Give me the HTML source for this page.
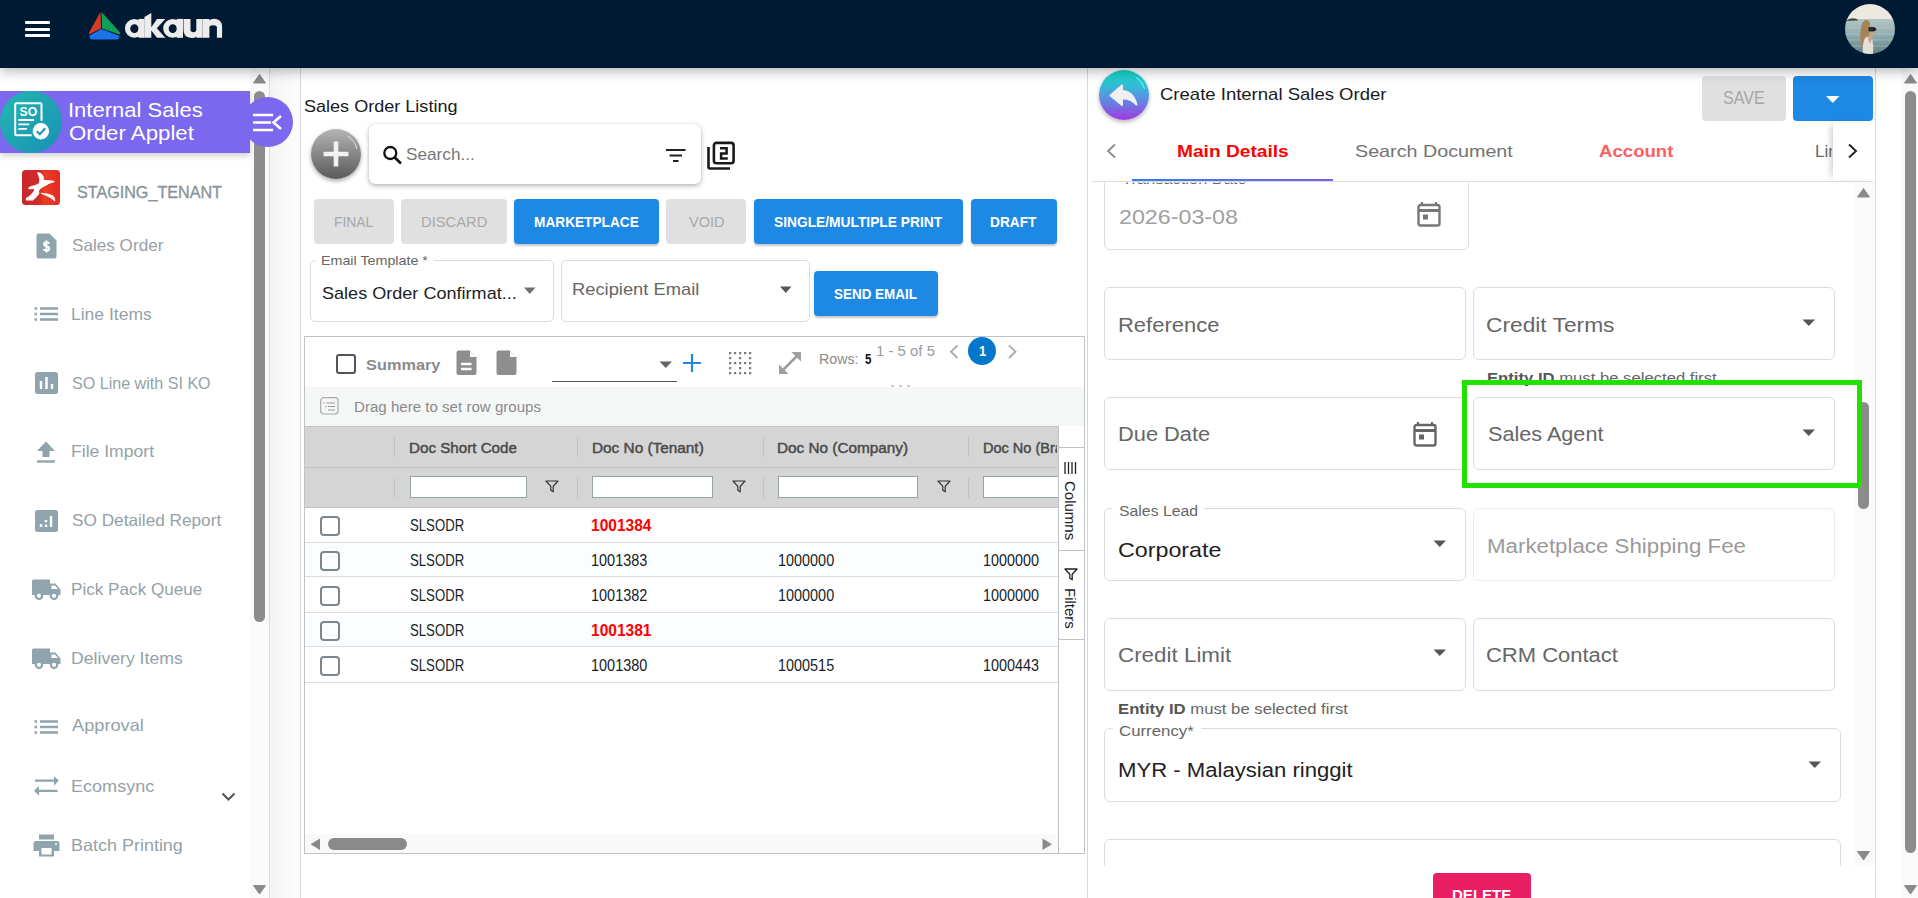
<!DOCTYPE html><html><head><meta charset="utf-8"><style>
*{box-sizing:border-box;margin:0;padding:0}
html,body{width:1918px;height:898px;overflow:hidden;background:#fff;font-family:"Liberation Sans",sans-serif}
.a{position:absolute}
.t{position:absolute;white-space:nowrap;line-height:1;transform-origin:0 0}
</style></head><body>
<!-- header -->
<div class="a" style="left:0;top:0;width:1918px;height:68px;background:#011a33;box-shadow:0 3px 12px rgba(0,0,0,.3);z-index:5"></div>
<div class="a" style="z-index:6;left:25px;top:21px;width:25px;height:3px;background:#fff;border-radius:1px"></div>
<div class="a" style="z-index:6;left:25px;top:27.5px;width:25px;height:3px;background:#fff;border-radius:1px"></div>
<div class="a" style="z-index:6;left:25px;top:34px;width:25px;height:3px;background:#fff;border-radius:1px"></div>
<svg class="a" style="z-index:6;left:88px;top:11px" width="34" height="30" viewBox="0 0 34 30">
 <path d="M12.5 1 L1 21.5 Q0.5 23 2 23 L13 17.5 Z" fill="#d63b2a"/>
 <path d="M13.5 1 L14 17.5 L31.5 23.5 Q32.5 23 32 21.5 Z" fill="#0aa05a"/>
 <path d="M13.5 18 L1.5 24.5 Q1.5 28.5 4 28.5 L29 28.5 Q31.5 28 31.5 25 Z" fill="#1a73e8"/>
</svg>
<svg class="a" style="z-index:7;left:120px;top:8px" width="110" height="34" viewBox="120 8 110 34">
 <g fill="#ececec" fill-rule="evenodd">
  <path d="M134.4 18.9 A9.5 9.45 0 1 0 134.4 37.8 A9.5 9.45 0 1 0 134.4 18.9 Z M134.4 24.3 A4.2 4.3 0 1 1 134.4 32.9 A4.2 4.3 0 1 1 134.4 24.3 Z"/>
  <rect x="138.6" y="18.9" width="6" height="18.9"/>
  <path d="M144.4 17 L151.3 12.9 V27.2 L157 18.9 H165.3 L156.8 28.3 L165.3 37.8 H157 L151.3 30.5 V37.8 H144.4 Z"/>
  <path d="M172.75 18.9 A9.6 9.45 0 1 0 172.75 37.8 A9.6 9.45 0 1 0 172.75 18.9 Z M172.75 24.3 A4.1 4.3 0 1 1 172.75 32.9 A4.1 4.3 0 1 1 172.75 24.3 Z"/>
  <rect x="176.8" y="18.9" width="6.2" height="18.9"/>
  <path d="M183.5 18.9 H190.5 V29.8 Q190.5 32.2 193.4 32.2 Q196.3 32.2 196.3 29.8 V18.9 H202.6 V37.8 H196.3 V36.4 Q194.6 38.1 191.5 38 Q183.5 37.6 183.5 30 Z"/>
  <path d="M202.6 37.8 V18.9 H209.4 V20.3 Q211.2 18.6 214.5 18.7 Q222.1 19.2 222.1 27 V37.8 H216.9 V27.2 Q216.9 25.2 213.2 25.2 Q209.4 25.2 209.4 27.2 V37.8 Z"/>
 </g>
</svg>
<svg class="a" style="z-index:6;left:1845px;top:4px" width="50" height="50" viewBox="0 0 50 50">
 <defs><clipPath id="av"><circle cx="25" cy="25" r="25"/></clipPath>
 <linearGradient id="sea" x1="0" y1="0" x2="0" y2="1"><stop offset="0" stop-color="#b3c6c6"/><stop offset="0.5" stop-color="#8eaaad"/><stop offset="1" stop-color="#5f8287"/></linearGradient></defs>
 <g clip-path="url(#av)">
  <rect x="0" y="0" width="50" height="16" fill="#ece9e1"/>
  <rect x="0" y="15" width="50" height="35" fill="url(#sea)"/>
  <path d="M1 17 Q5 13.5 9 14.5 Q12 14 13 16.5 Z" fill="#3e4b4a"/>
  <path d="M3 24 H47 M0 30 H50 M2 36 H48 M0 42 H50" stroke="#c9d6d6" stroke-width="0.6" opacity="0.6"/>
  <path d="M16.5 44 Q14 34 16 24 Q17 16 21.5 16 Q25 16.5 25 21 L24.5 30 Q23 38 21 46 Z" fill="#a68456"/>
  <path d="M18 50 Q17 40 20 34 Q24 31 27 34 Q29 42 28 50 Z" fill="#e3dfda"/>
  <path d="M23 34 Q25 28 27.5 27 L28.5 30 Q27 35 25 40 Z" fill="#c9a283"/>
  <rect x="23.5" y="23" width="6" height="4.5" rx="1" fill="#2b2b2b"/>
  <circle cx="29.5" cy="25.2" r="1.7" fill="#1d1d1d"/>
 </g>
</svg>

<!-- sidebar -->
<div class="a" style="left:250px;top:68px;width:19px;height:830px;background:#fafafa"></div>
<div class="a" style="left:269px;top:68px;width:1px;height:830px;background:#dcdcdc"></div>
<div class="a" style="left:270px;top:68px;width:30px;height:830px;background:linear-gradient(90deg,#f4f4f4,#fdfdfd)"></div>
<div class="a" style="left:300px;top:68px;width:1px;height:830px;background:#d8d8d8"></div>
<!-- sidebar scrollbar -->
<svg class="a" style="left:253px;top:74px" width="13" height="10"><path d="M6.5 0.5 L12.5 9 L0.5 9 Z" fill="#8a8a8a" stroke="#8a8a8a" stroke-linejoin="round"/></svg>
<div class="a" style="left:254px;top:91px;width:11px;height:531px;background:#8c8c8c;border-radius:6px"></div>
<svg class="a" style="left:253px;top:885px" width="13" height="10"><path d="M0.5 0.5 L12.5 0.5 L6.5 9 Z" fill="#8a8a8a" stroke="#8a8a8a" stroke-linejoin="round"/></svg>

<!-- applet bar -->
<div class="a" style="left:0;top:91px;width:250px;height:62px;background:#7b68ee;box-shadow:0 3px 6px rgba(0,0,0,.18)"></div>
<div class="a" style="left:0;top:91px;width:62px;height:62px;border-radius:50%;background:linear-gradient(135deg,#22b8b0,#1a8fb5)"></div>
<svg class="a" style="left:0;top:88px" width="70" height="70" viewBox="0 88 70 70">
 <path d="M31.6 135.3 H16.5 Q15.2 135.3 15.2 134 V104.5 Q15.2 103.2 16.5 103.2 H40.2 Q41.5 103.2 41.5 104.5 V120.7" fill="none" stroke="#fff" stroke-width="2"/>
 <text x="19.6" y="116.2" font-family="Liberation Sans" font-size="12.6" font-weight="700" fill="#fff" textLength="17.7" lengthAdjust="spacingAndGlyphs">SO</text>
 <path d="M18.3 120 H34 M18.3 124.4 H29.2 M18.3 128.8 H26.9" stroke="#fff" stroke-width="1.8"/>
 <circle cx="40.9" cy="131.3" r="8.2" fill="#fff"/>
 <path d="M36.8 131.2 L39.8 134.2 L45.2 128.2" fill="none" stroke="#1c9bb5" stroke-width="2.2"/>
</svg>
<div class="a" style="left:243px;top:97px;width:50px;height:50px;border-radius:50%;background:#7b68ee"></div>
<svg class="a" style="left:253px;top:113px" width="30" height="19" viewBox="0 0 30 19">
 <path d="M0 2 H20 M0 9.5 H18 M0 17 H20" stroke="#fff" stroke-width="2.6"/>
 <path d="M28 3 L20.5 9.5 L28 16" fill="none" stroke="#fff" stroke-width="2.6"/>
</svg>
<!-- ============ middle panel ============ -->
<div class="a" style="left:311px;top:129px;width:50px;height:50px;border-radius:50%;background:linear-gradient(#b4b4b4,#5a5a5a);box-shadow:0 2px 4px rgba(0,0,0,.35)"></div>
<svg class="a" style="left:311px;top:129px" width="50" height="50" viewBox="0 0 50 50">
 <path d="M36.5 7 A19.5 19.5 0 0 1 45.8 20" fill="none" stroke="#e8e8e8" stroke-width="0.9"/>
 <path d="M25 12.5 V37.5 M12.5 25 H37.5" stroke="#f2f2f2" stroke-width="4.6"/>
</svg>
<div class="a" style="left:369px;top:124px;width:332px;height:60px;background:#fff;border-radius:6px;box-shadow:0 2px 5px rgba(0,0,0,.28),0 0 1px rgba(0,0,0,.2)"></div>
<svg class="a" style="left:382px;top:145px" width="22" height="20" viewBox="0 0 22 20">
 <circle cx="8.3" cy="8" r="6" fill="none" stroke="#111" stroke-width="2.3"/>
 <path d="M12.5 12.2 L19 18.5" stroke="#111" stroke-width="2.6"/>
</svg>
<svg class="a" style="left:666px;top:148px" width="20" height="15" viewBox="0 0 20 15">
 <path d="M0 2 H19.5 M3.5 7.5 H16 M7 13 H12.5" stroke="#222" stroke-width="2.2"/>
</svg>
<svg class="a" style="left:706px;top:141px" width="30" height="30" viewBox="0 0 30 30">
 <path d="M2.5 6 V26 Q2.5 27.5 4 27.5 H24" fill="none" stroke="#1a1a1a" stroke-width="2.6"/>
 <rect x="7.9" y="1.9" width="19.7" height="20.4" rx="2.5" fill="none" stroke="#1a1a1a" stroke-width="2.6"/>
 <path d="M14 7.3 H20.6 V12.5 H15.1 V17.5 H21.8" fill="none" stroke="#1a1a1a" stroke-width="2.5"/>
</svg>
<!-- buttons -->
<div class="a" style="left:314px;top:199px;width:80px;height:45px;background:#e0e0e0;border-radius:4px"></div>
<div class="a" style="left:401px;top:199px;width:105.5px;height:45px;background:#e0e0e0;border-radius:4px"></div>
<div class="a" style="left:514px;top:199px;width:144.5px;height:45px;background:#1e88e5;border-radius:4px;box-shadow:0 2px 2px rgba(0,0,0,.22)"></div>
<div class="a" style="left:666px;top:199px;width:80px;height:45px;background:#e0e0e0;border-radius:4px"></div>
<div class="a" style="left:754px;top:199px;width:209px;height:45px;background:#1e88e5;border-radius:4px;box-shadow:0 2px 2px rgba(0,0,0,.22)"></div>
<div class="a" style="left:971px;top:199px;width:85.5px;height:45px;background:#1e88e5;border-radius:4px;box-shadow:0 2px 2px rgba(0,0,0,.22)"></div>
<!-- email fields -->
<div class="a" style="left:310px;top:260px;width:243.5px;height:61.5px;border:1px solid #dcdcdc;border-radius:5px"></div>
<div class="a" style="left:316px;top:255px;width:118px;height:8px;background:#fff"></div>
<svg class="a" style="left:523px;top:286.5px" width="14" height="8"><path d="M1 0.5 H12.5 L6.75 7 Z" fill="#707070"/></svg>
<div class="a" style="left:561px;top:259.5px;width:248.5px;height:62px;border:1px solid #dcdcdc;border-radius:5px"></div>
<svg class="a" style="left:779px;top:286px" width="14" height="8"><path d="M1 0.5 H12.5 L6.75 7 Z" fill="#555"/></svg>
<div class="a" style="left:814px;top:271px;width:124px;height:44.5px;background:#1e88e5;border-radius:4px;box-shadow:0 2px 2px rgba(0,0,0,.22)"></div>

<!-- ============ grid ============ -->
<div class="a" style="left:304px;top:336px;width:781px;height:518px;border:1px solid #bdc3c7"></div>
<!-- toolbar -->
<div class="a" style="left:336px;top:354px;width:20px;height:20px;border:2px solid #555;border-radius:3px"></div>
<svg class="a" style="left:456px;top:350px" width="22" height="26" viewBox="0 0 22 26">
 <path d="M2.5 0.5 H13.5 L20.5 7.5 V23 Q20.5 25 18.5 25 H2.5 Q0.5 25 0.5 23 V2.5 Q0.5 0.5 2.5 0.5 Z" fill="#8e8e8e"/>
 <path d="M13.5 0.5 V7.5 H20.5" fill="#fff" opacity="0"/>
 <path d="M14 1 L20 7 H14 Z" fill="#fff"/>
 <path d="M5 14 H15.5 M5 19 H15.5" stroke="#fff" stroke-width="2.6"/>
</svg>
<svg class="a" style="left:496px;top:350px" width="22" height="26" viewBox="0 0 22 26">
 <path d="M2.5 0.5 H13.5 L20.5 7.5 V23 Q20.5 25 18.5 25 H2.5 Q0.5 25 0.5 23 V2.5 Q0.5 0.5 2.5 0.5 Z" fill="#8e8e8e"/>
 <path d="M14 1 L20 7 H14 Z" fill="#fff"/>
</svg>
<div class="a" style="left:552px;top:380.5px;width:125px;height:1.5px;background:#555"></div>
<svg class="a" style="left:659px;top:361px" width="14" height="8"><path d="M0.5 0.5 H13 L6.75 7 Z" fill="#666"/></svg>
<svg class="a" style="left:682px;top:353px" width="20" height="20"><path d="M10 1 V19 M1 10 H19" stroke="#1e88e5" stroke-width="2.2"/></svg>
<svg class="a" style="left:729px;top:352px" width="24" height="24" viewBox="0 0 24 24"><rect x="0" y="0" width="2.2" height="2.2" fill="#7a7a7a"/><rect x="5" y="0" width="2.2" height="2.2" fill="#7a7a7a"/><rect x="10" y="0" width="2.2" height="2.2" fill="#7a7a7a"/><rect x="15" y="0" width="2.2" height="2.2" fill="#7a7a7a"/><rect x="20" y="0" width="2.2" height="2.2" fill="#7a7a7a"/><rect x="0" y="5" width="2.2" height="2.2" fill="#7a7a7a"/><rect x="10" y="5" width="2.2" height="2.2" fill="#7a7a7a"/><rect x="20" y="5" width="2.2" height="2.2" fill="#7a7a7a"/><rect x="0" y="10" width="2.2" height="2.2" fill="#7a7a7a"/><rect x="5" y="10" width="2.2" height="2.2" fill="#7a7a7a"/><rect x="10" y="10" width="2.2" height="2.2" fill="#7a7a7a"/><rect x="15" y="10" width="2.2" height="2.2" fill="#7a7a7a"/><rect x="20" y="10" width="2.2" height="2.2" fill="#7a7a7a"/><rect x="0" y="15" width="2.2" height="2.2" fill="#7a7a7a"/><rect x="10" y="15" width="2.2" height="2.2" fill="#7a7a7a"/><rect x="20" y="15" width="2.2" height="2.2" fill="#7a7a7a"/><rect x="0" y="20" width="2.2" height="2.2" fill="#7a7a7a"/><rect x="5" y="20" width="2.2" height="2.2" fill="#7a7a7a"/><rect x="10" y="20" width="2.2" height="2.2" fill="#7a7a7a"/><rect x="15" y="20" width="2.2" height="2.2" fill="#7a7a7a"/><rect x="20" y="20" width="2.2" height="2.2" fill="#7a7a7a"/></svg>
<svg class="a" style="left:778px;top:351px" width="24" height="24" viewBox="0 0 24 24">
 <path d="M4.5 19.5 L19.5 4.5" stroke="#9e9e9e" stroke-width="2.6"/>
 <path d="M1 23 V13.5 L10.5 23 Z M23 1 V10.5 L13.5 1 Z" fill="#9e9e9e"/>
</svg>
<svg class="a" style="left:948px;top:344px" width="12" height="16"><path d="M9.5 1.5 L3 7.7 L9.5 14" fill="none" stroke="#aaa" stroke-width="1.8"/></svg>
<div class="a" style="left:968px;top:336.5px;width:28px;height:28px;border-radius:50%;background:#0277cc"></div>
<svg class="a" style="left:1007px;top:344px" width="12" height="16"><path d="M2 1.5 L8.5 7.7 L2 14" fill="none" stroke="#aaa" stroke-width="1.8"/></svg>
<svg class="a" style="left:890px;top:384px" width="24" height="4"><path d="M1 2 H4 M9 2 H12 M17 2 H20" stroke="#bbb" stroke-width="1.5"/></svg>
<!-- drag bar -->
<div class="a" style="left:305px;top:387px;width:779px;height:39px;background:#f5f7f7"></div>
<svg class="a" style="left:320px;top:397px" width="19" height="18" viewBox="0 0 19 18">
 <rect x="0.7" y="0.7" width="17.3" height="16.3" rx="3" fill="none" stroke="#a9a9a9" stroke-width="1.2"/>
 <path d="M3.5 6 H5 M6.5 6 H15 M5 9.5 H6.5 M8 9.5 H15 M8 13 H15" stroke="#999" stroke-width="1.1"/>
</svg>
<!-- header rows -->
<div class="a" style="left:305px;top:426px;width:753px;height:82px;background:#d5d5d5;border-top:1px solid #bdc3c7"></div>
<div class="a" style="left:305px;top:467px;width:753px;height:1px;background:#bdc3c7"></div>
<div class="a" style="left:305px;top:507px;width:753px;height:1px;background:#bdc3c7"></div>
<div class="a" style="left:393.5px;top:437px;width:1px;height:20px;background:#c2c2c2"></div>
<div class="a" style="left:576.5px;top:437px;width:1px;height:20px;background:#c2c2c2"></div>
<div class="a" style="left:762.5px;top:437px;width:1px;height:20px;background:#c2c2c2"></div>
<div class="a" style="left:967.5px;top:437px;width:1px;height:20px;background:#c2c2c2"></div>
<div class="a" style="left:393.5px;top:478px;width:1px;height:20px;background:#c2c2c2"></div>
<div class="a" style="left:576.5px;top:478px;width:1px;height:20px;background:#c2c2c2"></div>
<div class="a" style="left:762.5px;top:478px;width:1px;height:20px;background:#c2c2c2"></div>
<div class="a" style="left:967.5px;top:478px;width:1px;height:20px;background:#c2c2c2"></div>
<div class="a" style="left:410px;top:476px;width:117px;height:22px;background:#fff;border:1px solid #95a5a6"></div>
<div class="a" style="left:592px;top:476px;width:121px;height:22px;background:#fff;border:1px solid #95a5a6"></div>
<div class="a" style="left:778px;top:476px;width:140px;height:22px;background:#fff;border:1px solid #95a5a6"></div>
<div class="a" style="left:983px;top:476px;width:80px;height:22px;background:#fff;border:1px solid #95a5a6"></div>
<svg class="a" style="left:545px;top:480px" width="14" height="13" viewBox="0 0 14 13"><path d="M1 1 H13 L8.2 6.3 V11.8 L5.8 10.2 V6.3 Z" fill="none" stroke="#333" stroke-width="1.2" stroke-linejoin="round"/></svg>
<svg class="a" style="left:731.5px;top:480px" width="14" height="13" viewBox="0 0 14 13"><path d="M1 1 H13 L8.2 6.3 V11.8 L5.8 10.2 V6.3 Z" fill="none" stroke="#333" stroke-width="1.2" stroke-linejoin="round"/></svg>
<svg class="a" style="left:936.5px;top:480px" width="14" height="13" viewBox="0 0 14 13"><path d="M1 1 H13 L8.2 6.3 V11.8 L5.8 10.2 V6.3 Z" fill="none" stroke="#333" stroke-width="1.2" stroke-linejoin="round"/></svg>
<!-- body rows -->
<div class="a" style="left:305px;top:542px;width:753px;height:35px;background:#fcfdfe;border-top:1px solid #d9dde0;border-bottom:1px solid #d9dde0"></div>
<div class="a" style="left:305px;top:612px;width:753px;height:35px;background:#fcfdfe;border-top:1px solid #d9dde0;border-bottom:1px solid #d9dde0"></div>
<div class="a" style="left:305px;top:682px;width:753px;height:1px;background:#d9dde0"></div>
<div class="a" style="left:319.5px;top:516px;width:20px;height:20px;border:2px solid #7d868c;border-radius:4px"></div>
<div class="a" style="left:319.5px;top:551px;width:20px;height:20px;border:2px solid #7d868c;border-radius:4px"></div>
<div class="a" style="left:319.5px;top:586px;width:20px;height:20px;border:2px solid #7d868c;border-radius:4px"></div>
<div class="a" style="left:319.5px;top:621px;width:20px;height:20px;border:2px solid #7d868c;border-radius:4px"></div>
<div class="a" style="left:319.5px;top:656px;width:20px;height:20px;border:2px solid #7d868c;border-radius:4px"></div>
<!-- side panel -->
<div class="a" style="left:1058px;top:426px;width:26px;height:427px;background:#fff;border-left:1px solid #bdc3c7"></div>
<div class="a" style="left:1058px;top:447px;width:26px;height:1px;background:#bdc3c7"></div>
<div class="a" style="left:1058px;top:550px;width:26px;height:1px;background:#bdc3c7"></div>
<div class="a" style="left:1058px;top:639px;width:26px;height:1px;background:#bdc3c7"></div>
<svg class="a" style="left:1064px;top:462px" width="14" height="12"><path d="M1 0 V12 M4.5 0 V12 M8 0 V12 M11.5 0 V12" stroke="#222" stroke-width="1.3"/></svg>
<svg class="a" style="left:1064px;top:567.5px" width="14" height="13" viewBox="0 0 14 13"><path d="M1 1 H13 L8.2 6.3 V11.8 L5.8 10.2 V6.3 Z" fill="none" stroke="#222" stroke-width="1.3" stroke-linejoin="round"/></svg>
<div class="a" style="left:1062.5px;top:481px;writing-mode:vertical-rl;font-size:15px;line-height:1;color:#222;white-space:nowrap">Columns</div>
<div class="a" style="left:1062.5px;top:588px;writing-mode:vertical-rl;font-size:15px;line-height:1;color:#222;white-space:nowrap">Filters</div>
<!-- h scroll -->
<div class="a" style="left:305px;top:834px;width:753px;height:19px;background:#f9f9f9"></div>
<svg class="a" style="left:310px;top:838px" width="11" height="13"><path d="M10 0.5 V12 L0.5 6.25 Z" fill="#8a8a8a"/></svg>
<div class="a" style="left:328px;top:838px;width:79px;height:11.5px;background:#8a8a8a;border-radius:6px"></div>
<svg class="a" style="left:1042px;top:838px" width="11" height="13"><path d="M0.5 0.5 V12 L10 6.25 Z" fill="#8a8a8a"/></svg>
<div class="a" style="left:1087px;top:68px;width:1px;height:830px;background:#d8d8d8"></div>
<!-- ============ right panel ============ -->
<div class="a" style="left:1099px;top:70px;width:50px;height:50px;border-radius:50%;background:linear-gradient(#0fd8c0,#30bfd6 30%,#5b8ee4 58%,#a338e0);box-shadow:0 2px 4px rgba(0,0,0,.3)"></div>
<svg class="a" style="left:1099px;top:70px" width="50" height="50" viewBox="0 0 50 50">
 <path d="M37 7.5 A20.5 20.5 0 0 1 45.5 19" fill="none" stroke="#6ff0f0" stroke-width="1.1"/>
 <path d="M11.5 25.5 L23 15.5 V21 Q34 21.5 37.5 34.5 Q32 28 23 28.5 V35 Z" fill="#f0f0f0" stroke="#f0f0f0" stroke-width="2" stroke-linejoin="round"/>
</svg>
<div class="a" style="left:1702px;top:76px;width:84px;height:45px;background:#e0e0e0;border-radius:4px"></div>
<div class="a" style="left:1793px;top:76px;width:80px;height:45px;background:#1e88e5;border-radius:4px"></div>
<svg class="a" style="left:1825px;top:95px" width="16" height="9"><path d="M1 1 H14.5 L7.75 8 Z" fill="#fff"/></svg>
<!-- tabs -->
<svg class="a" style="left:1105px;top:143px" width="12" height="16"><path d="M10 1.5 L3 8 L10 14.5" fill="none" stroke="#8a8a8a" stroke-width="1.8"/></svg>
<div class="a" style="left:1092px;top:180.5px;width:781px;height:1px;background:#dedede"></div>
<div class="a" style="left:1132px;top:178.5px;width:201px;height:2.5px;background:linear-gradient(90deg,#2c7ff0,#7b5ff0)"></div>
<div class="a" style="left:1833px;top:122px;width:40px;height:58px;background:#fff;box-shadow:-5px 0 7px -3px rgba(0,0,0,.2)"></div>
<svg class="a" style="left:1847px;top:143px" width="12" height="16"><path d="M2 1.5 L9 8 L2 14.5" fill="none" stroke="#222" stroke-width="1.9"/></svg>
<div class="a" style="left:1875px;top:68px;width:1px;height:830px;background:#d8d8d8"></div>
<!-- outer scrollbar -->
<div class="a" style="left:1901px;top:68px;width:17px;height:830px;background:#fafafa"></div>
<svg class="a" style="left:1904px;top:74px" width="13" height="10"><path d="M6.5 0.5 L12.5 9 L0.5 9 Z" fill="#8a8a8a" stroke="#8a8a8a" stroke-linejoin="round"/></svg>
<div class="a" style="left:1905px;top:90.5px;width:11px;height:762px;background:#8c8c8c;border-radius:6px"></div>
<svg class="a" style="left:1904px;top:885px" width="13" height="10"><path d="M0.5 0.5 L12.5 0.5 L6.5 9 Z" fill="#8a8a8a" stroke="#8a8a8a" stroke-linejoin="round"/></svg>
<!-- form scroll area -->
<div class="a" style="left:1089px;top:182px;width:786px;height:684px;overflow:hidden">
 <div class="a" style="left:765px;top:0;width:21px;height:684px;background:#fafafa"></div>
 <svg class="a" style="left:768px;top:6px" width="13" height="10"><path d="M6.5 0.5 L12.5 9 L0.5 9 Z" fill="#8a8a8a" stroke="#8a8a8a" stroke-linejoin="round"/></svg>
 <div class="a" style="left:769px;top:219.5px;width:11px;height:107.5px;background:#8c8c8c;border-radius:6px"></div>
 <svg class="a" style="left:768px;top:669px" width="13" height="10"><path d="M0.5 0.5 L12.5 0.5 L6.5 9 Z" fill="#8a8a8a" stroke="#8a8a8a" stroke-linejoin="round"/></svg>
 <!-- transaction date -->
 <div class="a" style="left:15px;top:-20px;width:365px;height:87.5px;border:1px solid #dcdcdc;border-radius:6px"></div>
 <svg class="a" style="left:328px;top:19px" width="24" height="26" viewBox="0 0 24 26"><path d="M5 1 V5 M19 1 V5" stroke="#777" stroke-width="2.2"/><rect x="1.5" y="4" width="21" height="20.5" rx="2" fill="none" stroke="#777" stroke-width="2.4"/><path d="M1.5 9.5 H22.5" stroke="#777" stroke-width="3"/><rect x="6" y="13.5" width="5" height="5" fill="#777"/></svg>
 <!-- row: reference / credit terms -->
 <div class="a" style="left:15px;top:105px;width:361.5px;height:72.5px;border:1px solid #dcdcdc;border-radius:6px"></div>
 <div class="a" style="left:384px;top:105px;width:362px;height:72.5px;border:1px solid #dcdcdc;border-radius:6px"></div>
 <svg class="a" style="left:713px;top:137px" width="14" height="8"><path d="M0.5 0.5 H13 L6.75 7 Z" fill="#555"/></svg>
 <!-- row: due date / sales agent -->
 <div class="a" style="left:15px;top:215px;width:361.5px;height:73px;border:1px solid #dcdcdc;border-radius:6px"></div>
 <svg class="a" style="left:324px;top:239px" width="24" height="26" viewBox="0 0 24 26"><path d="M5 1 V5 M19 1 V5" stroke="#666" stroke-width="2.2"/><rect x="1.5" y="4" width="21" height="20.5" rx="2" fill="none" stroke="#666" stroke-width="2.4"/><path d="M1.5 9.5 H22.5" stroke="#666" stroke-width="3"/><rect x="6" y="13.5" width="5" height="5" fill="#666"/></svg>
 <div class="a" style="left:384px;top:215px;width:362px;height:73px;border:1px solid #dcdcdc;border-radius:6px"></div>
 <svg class="a" style="left:713px;top:247px" width="14" height="8"><path d="M0.5 0.5 H13 L6.75 7 Z" fill="#555"/></svg>
 <!-- row: sales lead / marketplace -->
 <div class="a" style="left:15px;top:326px;width:361.5px;height:72.5px;border:1px solid #dcdcdc;border-radius:6px"></div>
 <div class="a" style="left:23px;top:320px;width:92px;height:10px;background:#fff"></div>
 <svg class="a" style="left:344px;top:358px" width="14" height="8"><path d="M0.5 0.5 H13 L6.75 7 Z" fill="#555"/></svg>
 <div class="a" style="left:384px;top:326px;width:362px;height:72.5px;border:1px solid #ececec;border-radius:6px"></div>
 <!-- row: credit limit / crm -->
 <div class="a" style="left:15px;top:436px;width:361.5px;height:72.5px;border:1px solid #dcdcdc;border-radius:6px"></div>
 <svg class="a" style="left:344px;top:467px" width="14" height="8"><path d="M0.5 0.5 H13 L6.75 7 Z" fill="#555"/></svg>
 <div class="a" style="left:384px;top:436px;width:362px;height:72.5px;border:1px solid #dcdcdc;border-radius:6px"></div>
 <!-- currency -->
 <div class="a" style="left:15px;top:546px;width:737px;height:73.5px;border:1px solid #dcdcdc;border-radius:6px"></div>
 <div class="a" style="left:23.5px;top:540px;width:88px;height:10px;background:#fff"></div>
 <svg class="a" style="left:719px;top:579px" width="14" height="8"><path d="M0.5 0.5 H13 L6.75 7 Z" fill="#555"/></svg>
 <!-- next field -->
 <div class="a" style="left:15px;top:657px;width:737px;height:73px;border:1px solid #dcdcdc;border-radius:6px"></div>
</div>
<div class="a" style="left:1433px;top:873px;width:98px;height:40px;background:#e91e63;border-radius:4px"></div>
<!-- green highlight -->
<div class="a" style="z-index:20;left:1462px;top:379.5px;width:399.5px;height:108.5px;border:5px solid #22e000"></div>
<!-- sidebar icons -->
<div class="a" style="left:22.3px;top:169.8px;width:37.5px;height:35.3px;border-radius:3.5px;background:linear-gradient(90deg,#c9272e,#d22a27 45%,#ea3d23 60%,#e52a22)"></div>
<svg class="a" style="left:22.3px;top:169.8px" width="38" height="36" viewBox="0 0 38 36">
 <path d="M15.8 2.8 Q19 3 20.8 6.5 Q21.5 8.5 21.3 10.3 Q27 10.5 31.8 11.5 Q28 12.5 25.8 13.8 Q21 16 17.3 19 Q15.5 21.5 16.8 23.3 Q13 28 10.8 29.8 L4.5 29.8 Q4.5 27.5 6 27.8 Q10 25 12.3 21.3 L12.8 17.8 Q10 19 6.8 18.3 Q9 16.5 12.5 16 Q15 15 17.5 13.5 L18 9.5 Q17.5 6 15.8 2.8 Z" fill="#fff" stroke="#fff" stroke-width="1.3" stroke-linejoin="round"/>
 <path d="M19.3 23.3 Q26 23.5 30.8 25.8 Q33 28 32.8 30.8 Q30 28.5 27.8 27.3 Q24 25 19.3 23.3 Z" fill="#fff" stroke="#fff" stroke-width="1" stroke-linejoin="round"/>
</svg>
<svg class="a" style="left:36px;top:233px" width="21" height="26" viewBox="0 0 21 26">
 <path d="M2.5 0.5 H13.5 L20.5 7.5 V23.5 Q20.5 25.5 18.5 25.5 H2.5 Q0.5 25.5 0.5 23.5 V2.5 Q0.5 0.5 2.5 0.5 Z" fill="#90a4ae"/>
 <path d="M13.5 10.5 Q12.5 9.2 10.5 9.2 Q8 9.3 8 11.2 Q8.2 13 10.5 13.3 Q13.2 13.7 13.2 15.6 Q13 17.6 10.5 17.7 Q8.2 17.6 7.6 16.2 M10.5 7.5 V19.5" fill="none" stroke="#fff" stroke-width="1.9"/>
</svg>
<svg class="a" style="left:34px;top:307px" width="25" height="14" viewBox="0 0 25 14">
 <path d="M0.5 1.5 H3 M0.5 7 H3 M0.5 12.5 H3 M6 1.5 H24 M6 7 H24 M6 12.5 H24" stroke="#90a4ae" stroke-width="2.3"/>
</svg>
<svg class="a" style="left:35px;top:372px" width="23" height="22" viewBox="0 0 23 22">
 <rect x="0" y="0" width="23" height="22" rx="2.5" fill="#90a4ae"/>
 <path d="M6 9 V17 M11.5 5 V17 M17 12 V17" stroke="#fff" stroke-width="2.4"/>
</svg>
<svg class="a" style="left:36px;top:441px" width="20" height="22" viewBox="0 0 20 22">
 <path d="M10 0.5 L19 10 H13.5 V16 H6.5 V10 H1 Z" fill="#90a4ae"/>
 <path d="M1 20.5 H19" stroke="#90a4ae" stroke-width="2.4"/>
</svg>
<svg class="a" style="left:35px;top:510px" width="23" height="22" viewBox="0 0 23 22">
 <rect x="0" y="0" width="23" height="22" rx="2.5" fill="#90a4ae"/>
 <path d="M6 14 V17 M11 10 V12.2 M11 14.5 V17 M16 6 V17" stroke="#fff" stroke-width="2.4"/>
</svg>
<svg class="a" style="left:32px;top:579px" width="29" height="21" viewBox="0 0 29 21">
 <path d="M0 2 Q0 0.5 1.5 0.5 H18 V4.5 H23.5 L28.5 10.5 V16 H0 Z" fill="#90a4ae"/>
 <path d="M19.5 6.5 H23 L26 10 H19.5 Z" fill="#fff"/>
 <circle cx="7" cy="16.8" r="3.2" fill="#fff" stroke="#90a4ae" stroke-width="2.2"/>
 <circle cx="22" cy="16.8" r="3.2" fill="#fff" stroke="#90a4ae" stroke-width="2.2"/>
</svg>
<svg class="a" style="left:32px;top:647.5px" width="29" height="21" viewBox="0 0 29 21">
 <path d="M0 2 Q0 0.5 1.5 0.5 H18 V4.5 H23.5 L28.5 10.5 V16 H0 Z" fill="#90a4ae"/>
 <path d="M19.5 6.5 H23 L26 10 H19.5 Z" fill="#fff"/>
 <circle cx="7" cy="16.8" r="3.2" fill="#fff" stroke="#90a4ae" stroke-width="2.2"/>
 <circle cx="22" cy="16.8" r="3.2" fill="#fff" stroke="#90a4ae" stroke-width="2.2"/>
</svg>
<svg class="a" style="left:34px;top:720px" width="25" height="14" viewBox="0 0 25 14">
 <path d="M0.5 1.5 H3 M0.5 7 H3 M0.5 12.5 H3 M6 1.5 H24 M6 7 H24 M6 12.5 H24" stroke="#90a4ae" stroke-width="2.3"/>
</svg>
<svg class="a" style="left:34px;top:776px" width="26" height="21" viewBox="0 0 26 21">
 <path d="M1 4.6 H21 M4 14.8 H23.6" stroke="#90a4ae" stroke-width="2.2"/>
 <path d="M20 0.3 L24.9 4.6 L20 9.7 Z M5 10 L0 14.8 L5 19.8 Z" fill="#90a4ae"/>
</svg>

<svg class="a" style="left:33px;top:834px" width="27" height="23" viewBox="0 0 27 23">
 <rect x="6" y="0.5" width="15" height="5" fill="#90a4ae"/>
 <path d="M3 7 H24 Q26.5 7 26.5 9.5 V17 H21 V22.5 H6 V17 H0.5 V9.5 Q0.5 7 3 7 Z" fill="#90a4ae"/>
 <rect x="8.5" y="14" width="10" height="6.5" fill="#fff"/><circle cx="23" cy="10" r="1" fill="#fff"/>
</svg>
<svg class="a" style="left:221px;top:792px" width="15" height="10"><path d="M1.5 1.5 L7.5 7.5 L13.5 1.5" fill="none" stroke="#555" stroke-width="2"/></svg>

<span class="t" id="t0" style="left:304.00px;top:97.9px;font-size:17.01px;color:#1a1a1a;font-weight:400;transform:scaleX(1.0617);">Sales Order Listing</span>
<span class="t" id="t1" style="left:68.33px;top:99.7px;font-size:20.64px;color:#fff;font-weight:400;transform:scaleX(1.0681);">Internal Sales</span>
<span class="t" id="t2" style="left:69.40px;top:122.7px;font-size:20.64px;color:#fff;font-weight:400;transform:scaleX(1.0785);">Order Applet</span>
<span class="t" id="t3" style="left:77.00px;top:183.9px;font-size:16.28px;color:#89949a;font-weight:400;transform:scaleX(0.9920);-webkit-text-stroke:0.35px #89949a">STAGING_TENANT</span>
<span class="t" id="t4" style="left:71.80px;top:236.8px;font-size:16.28px;color:#95a1a7;font-weight:400;transform:scaleX(1.0530);">Sales Order</span>
<span class="t" id="t5" style="left:70.72px;top:305.9px;font-size:16.28px;color:#95a1a7;font-weight:400;transform:scaleX(1.0757);">Line Items</span>
<span class="t" id="t6" style="left:71.80px;top:374.9px;font-size:16.28px;color:#95a1a7;font-weight:400;transform:scaleX(0.9894);">SO Line with SI KO</span>
<span class="t" id="t7" style="left:70.72px;top:443.3px;font-size:16.28px;color:#95a1a7;font-weight:400;transform:scaleX(1.0812);">File Import</span>
<span class="t" id="t8" style="left:71.80px;top:512.0px;font-size:16.28px;color:#95a1a7;font-weight:400;transform:scaleX(1.0578);">SO Detailed Report</span>
<span class="t" id="t9" style="left:70.75px;top:580.6px;font-size:16.28px;color:#95a1a7;font-weight:400;transform:scaleX(1.0532);">Pick Pack Queue</span>
<span class="t" id="t10" style="left:70.72px;top:650.3px;font-size:16.28px;color:#95a1a7;font-weight:400;transform:scaleX(1.0844);">Delivery Items</span>
<span class="t" id="t11" style="left:71.80px;top:717.4px;font-size:16.28px;color:#95a1a7;font-weight:400;transform:scaleX(1.1198);">Approval</span>
<span class="t" id="t12" style="left:70.69px;top:777.8px;font-size:16.28px;color:#95a1a7;font-weight:400;transform:scaleX(1.1098);">Ecomsync</span>
<span class="t" id="t13" style="left:70.70px;top:837.0px;font-size:16.28px;color:#95a1a7;font-weight:400;transform:scaleX(1.1046);">Batch Printing</span>
<span class="t" id="t14" style="left:406.40px;top:146.5px;font-size:15.70px;color:#777;font-weight:400;transform:scaleX(1.0957);">Search...</span>
<span class="t" id="t15" style="left:333.51px;top:214.1px;font-size:15.55px;color:#a8a8a8;font-weight:500;transform:scaleX(0.8891);">FINAL</span>
<span class="t" id="t16" style="left:420.75px;top:214.1px;font-size:15.55px;color:#a8a8a8;font-weight:500;transform:scaleX(0.9470);">DISCARD</span>
<span class="t" id="t17" style="left:533.72px;top:214.1px;font-size:15.55px;color:#fff;font-weight:700;transform:scaleX(0.8793);">MARKETPLACE</span>
<span class="t" id="t18" style="left:688.90px;top:214.1px;font-size:15.55px;color:#a8a8a8;font-weight:500;transform:scaleX(0.9370);">VOID</span>
<span class="t" id="t19" style="left:774.00px;top:214.1px;font-size:15.55px;color:#fff;font-weight:700;transform:scaleX(0.8858);">SINGLE/MULTIPLE PRINT</span>
<span class="t" id="t20" style="left:989.72px;top:214.1px;font-size:15.55px;color:#fff;font-weight:700;transform:scaleX(0.8816);">DRAFT</span>
<span class="t" id="t21" style="left:834.00px;top:286.3px;font-size:15.55px;color:#fff;font-weight:700;transform:scaleX(0.8653);">SEND EMAIL</span>
<span class="t" id="t22" style="left:320.64px;top:255.2px;font-size:12.35px;color:#666;font-weight:400;transform:scaleX(1.1567);">Email Template *</span>
<span class="t" id="t23" style="left:322.40px;top:285.2px;font-size:17.01px;color:#222;font-weight:400;transform:scaleX(1.0627);">Sales Order Confirmat...</span>
<span class="t" id="t24" style="left:571.72px;top:280.8px;font-size:17.01px;color:#666;font-weight:400;transform:scaleX(1.0780);">Recipient Email</span>
<span class="t" id="t25" style="left:366.20px;top:356.8px;font-size:15.12px;color:#8a8a8a;font-weight:700;transform:scaleX(1.0812);">Summary</span>
<span class="t" id="t26" style="left:819.10px;top:351.9px;font-size:14.24px;color:#8a8a8a;font-weight:400;transform:scaleX(0.9975);">Rows:</span>
<span class="t" id="t27" style="left:864.50px;top:351.9px;font-size:14.24px;color:#111;font-weight:700;transform:scaleX(0.8125);">5</span>
<span class="t" id="t28" style="left:875.95px;top:344.2px;font-size:14.24px;color:#9a9a9a;font-weight:400;transform:scaleX(1.0495);">1 - 5 of 5</span>
<span class="t" id="t29" style="left:978.50px;top:344.0px;font-size:14.83px;color:#fff;font-weight:700;transform:scaleX(0.8750);">1</span>
<span class="t" id="t30" style="left:353.96px;top:399.7px;font-size:14.53px;color:#8a8a8a;font-weight:400;transform:scaleX(1.0394);">Drag here to set row groups</span>
<span class="t" id="t31" style="left:408.96px;top:440.9px;font-size:14.53px;color:#4a4a4a;font-weight:400;transform:scaleX(1.0450);-webkit-text-stroke:0.45px #4a4a4a">Doc Short Code</span>
<span class="t" id="t32" style="left:591.64px;top:440.9px;font-size:14.53px;color:#4a4a4a;font-weight:400;transform:scaleX(1.0573);-webkit-text-stroke:0.45px #4a4a4a">Doc No (Tenant)</span>
<span class="t" id="t33" style="left:777.44px;top:440.9px;font-size:14.53px;color:#4a4a4a;font-weight:400;transform:scaleX(1.0556);-webkit-text-stroke:0.45px #4a4a4a">Doc No (Company)</span>
<span class="t" id="t34" style="left:409.60px;top:517.7px;font-size:15.99px;color:#181d1f;font-weight:400;transform:scaleX(0.8244);">SLSODR</span>
<span class="t" id="t35" style="left:591.43px;top:517.7px;font-size:15.99px;color:#f00;font-weight:700;transform:scaleX(0.9709);">1001384</span>
<span class="t" id="t36" style="left:409.60px;top:552.7px;font-size:15.99px;color:#181d1f;font-weight:400;transform:scaleX(0.8244);">SLSODR</span>
<span class="t" id="t37" style="left:591.49px;top:552.7px;font-size:15.99px;color:#181d1f;font-weight:400;transform:scaleX(0.9056);">1001383</span>
<span class="t" id="t38" style="left:778.10px;top:552.7px;font-size:15.99px;color:#181d1f;font-weight:400;transform:scaleX(0.9023);">1000000</span>
<span class="t" id="t39" style="left:983.10px;top:552.7px;font-size:15.99px;color:#181d1f;font-weight:400;transform:scaleX(0.9007);">1000000</span>
<span class="t" id="t40" style="left:409.60px;top:587.7px;font-size:15.99px;color:#181d1f;font-weight:400;transform:scaleX(0.8244);">SLSODR</span>
<span class="t" id="t41" style="left:591.49px;top:587.7px;font-size:15.99px;color:#181d1f;font-weight:400;transform:scaleX(0.9056);">1001382</span>
<span class="t" id="t42" style="left:778.10px;top:587.7px;font-size:15.99px;color:#181d1f;font-weight:400;transform:scaleX(0.9023);">1000000</span>
<span class="t" id="t43" style="left:983.10px;top:587.7px;font-size:15.99px;color:#181d1f;font-weight:400;transform:scaleX(0.9007);">1000000</span>
<span class="t" id="t44" style="left:409.60px;top:622.7px;font-size:15.99px;color:#181d1f;font-weight:400;transform:scaleX(0.8244);">SLSODR</span>
<span class="t" id="t45" style="left:591.43px;top:622.7px;font-size:15.99px;color:#f00;font-weight:700;transform:scaleX(0.9709);">1001381</span>
<span class="t" id="t46" style="left:409.60px;top:657.7px;font-size:15.99px;color:#181d1f;font-weight:400;transform:scaleX(0.8244);">SLSODR</span>
<span class="t" id="t47" style="left:591.49px;top:657.7px;font-size:15.99px;color:#181d1f;font-weight:400;transform:scaleX(0.9056);">1001380</span>
<span class="t" id="t48" style="left:778.10px;top:657.7px;font-size:15.99px;color:#181d1f;font-weight:400;transform:scaleX(0.9023);">1000515</span>
<span class="t" id="t49" style="left:983.10px;top:657.7px;font-size:15.99px;color:#181d1f;font-weight:400;transform:scaleX(0.9007);">1000443</span>
<span class="t" id="t50" style="left:1160.40px;top:87.2px;font-size:16.57px;color:#1a1a1a;font-weight:400;transform:scaleX(1.1182);">Create Internal Sales Order</span>
<span class="t" id="t51" style="left:1723.20px;top:90.2px;font-size:17.73px;color:#a6a6a6;font-weight:500;transform:scaleX(0.9103);">SAVE</span>
<span class="t" id="t52" style="left:1176.77px;top:142.9px;font-size:17.01px;color:#f00;font-weight:700;transform:scaleX(1.1265);">Main Details</span>
<span class="t" id="t53" style="left:1354.90px;top:142.9px;font-size:17.01px;color:#727272;font-weight:400;transform:scaleX(1.1596);">Search Document</span>
<span class="t" id="t54" style="left:1598.50px;top:142.9px;font-size:17.01px;color:#ff5e5e;font-weight:700;transform:scaleX(1.0945);">Account</span>
<span class="t" id="t55" style="left:1815.00px;top:142.9px;font-size:17.01px;color:#666;font-weight:400;transform:scaleX(1.0000);clip-path:inset(0 calc(100% - 17px) 0 0)">Lin</span>
<span class="t" id="t56" style="left:1119.20px;top:208.1px;font-size:19.62px;color:#a0a0a0;font-weight:400;transform:scaleX(1.1862);">2026-03-08</span>
<span class="t" id="t57" style="left:1118.32px;top:314.5px;font-size:20.35px;color:#666;font-weight:400;transform:scaleX(1.0802);">Reference</span>
<span class="t" id="t58" style="left:1486.48px;top:314.5px;font-size:20.35px;color:#666;font-weight:400;transform:scaleX(1.1180);">Credit Terms</span>
<span class="t" id="t59" style="left:1118.33px;top:424.4px;font-size:20.35px;color:#666;font-weight:400;transform:scaleX(1.0724);">Due Date</span>
<span class="t" id="t60" style="left:1487.60px;top:424.4px;font-size:20.35px;color:#666;font-weight:400;transform:scaleX(1.0630);">Sales Agent</span>
<span class="t" id="t61" style="left:1119.40px;top:503.8px;font-size:14.53px;color:#666;font-weight:400;transform:scaleX(1.0887);">Sales Lead</span>
<span class="t" id="t62" style="left:1118.27px;top:539.8px;font-size:20.64px;color:#222;font-weight:400;transform:scaleX(1.1281);">Corporate</span>
<span class="t" id="t63" style="left:1486.50px;top:535.8px;font-size:20.35px;color:#9a9a9a;font-weight:400;transform:scaleX(1.0955);">Marketplace Shipping Fee</span>
<span class="t" id="t64" style="left:1118.10px;top:645.2px;font-size:20.35px;color:#666;font-weight:400;transform:scaleX(1.1004);">Credit Limit</span>
<span class="t" id="t65" style="left:1486.42px;top:645.2px;font-size:20.35px;color:#666;font-weight:400;transform:scaleX(1.0803);">CRM Contact</span>
<span class="t" id="t66" style="left:1118.12px;top:701.4px;font-size:15.41px;color:#666;font-weight:400;transform:scaleX(1.0830);"><b style="color:#555">Entity ID</b> must be selected first</span>
<span class="t" id="t67" style="left:1119.20px;top:723.9px;font-size:14.24px;color:#666;font-weight:400;transform:scaleX(1.1813);">Currency*</span>
<span class="t" id="t68" style="left:1118.11px;top:760.3px;font-size:20.35px;color:#222;font-weight:400;transform:scaleX(1.0868);">MYR - Malaysian ringgit</span>
<span class="t" id="t69" style="left:1452.23px;top:887.1px;font-size:15.55px;color:#fff;font-weight:700;transform:scaleX(0.9673);">DELETE</span>
<span class="t" id="t70" style="left:1486.52px;top:370.0px;font-size:15.41px;color:#666;font-weight:400;transform:scaleX(1.0815);"><b style="color:#555">Entity ID</b> must be selected first</span>
<span class="t" id="t71" style="left:1121.70px;top:171.8px;font-size:14.53px;color:#666;font-weight:400;transform:scaleX(1.1326);clip-path:inset(10.7px 0 0 0);z-index:2">Transaction Date</span>
<span class="t" id="t72" style="left:983.00px;top:440.9px;font-size:14.53px;color:#4a4a4a;font-weight:400;transform:scaleX(1.0000);clip-path:inset(0 calc(100% - 74px) 0 0);-webkit-text-stroke:0.45px #4a4a4a">Doc No (Branch)</span>
</body></html>
